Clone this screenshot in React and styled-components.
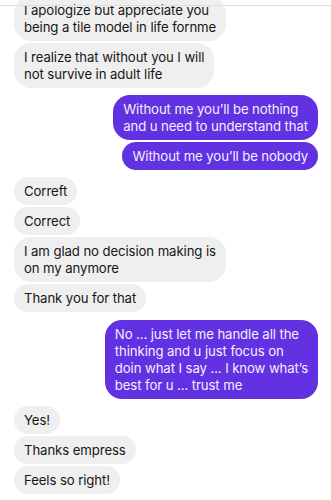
import styled, { createGlobalStyle } from "styled-components";

const Global = createGlobalStyle`
  body {
    margin: 0;
    background: #fff;
    font-family: "Inter", "Liberation Sans", sans-serif;
  }
`;

const Screen = styled.div`
  position: relative;
  width: 331px;
  height: 500px;
  overflow: hidden;
  background: #fff;
`;

const TopRule = styled.div`
  position: absolute;
  top: 5px;
  left: 0;
  right: 0;
  height: 1px;
  background: #dcdcdc;
`;

const Thread = styled.div`
  display: flex;
  flex-direction: column;
  gap: 7px;
  margin-top: -4px;
  padding: 0 13px 0 14px;
`;

const Group = styled.div`
  display: flex;
  flex-direction: column;
  gap: 2px;
  align-items: ${(p) => (p.$mine ? "flex-end" : "flex-start")};
  margin-top: ${(p) => (p.$extra ? "1px" : "0")};
`;

const Bubble = styled.div`
  width: fit-content;
  padding: 5.5px 10px;
  border-radius: 17px;
  font-size: 13.2px;
  line-height: 17px;
  letter-spacing: -0.1px;
  background: ${(p) => (p.$mine ? "#6231e2" : "#efefef")};
  color: ${(p) => (p.$mine ? "#f4efff" : "#161616")};
  white-space: nowrap;
`;

const thread = [
  {
    mine: false,
    msgs: [
      ["I apologize but appreciate you", "being a tile model in life fornme"],
      ["I realize that without you I will", "not survive in adult life"],
    ],
  },
  {
    mine: true,
    msgs: [
      ["Without me you’ll be nothing", "and u need to understand that"],
      ["Without me you’ll be nobody"],
    ],
  },
  {
    mine: false,
    msgs: [
      ["Correft"],
      ["Correct"],
      ["I am glad no decision making is", "on my anymore"],
      ["Thank you for that"],
    ],
  },
  {
    mine: true,
    extra: true,
    msgs: [
      [
        "No ... just let me handle all the",
        "thinking and u just focus on",
        "doin what I say ... I know what’s",
        "best for u ... trust me",
      ],
    ],
  },
  {
    mine: false,
    msgs: [["Yes!"], ["Thanks empress"], ["Feels so right!"]],
  },
];

const App = () => {
  return (
    <>
      <Global />
      <Screen>
        <Thread>
          {thread.map((g, i) => (
            <Group key={i} $mine={g.mine} $extra={g.extra}>
              {g.msgs.map((lines, j) => (
                <Bubble key={j} $mine={g.mine}>
                  {lines.map((l, k) => (
                    <div key={k}>{l}</div>
                  ))}
                </Bubble>
              ))}
            </Group>
          ))}
        </Thread>
        <TopRule />
      </Screen>
    </>
  );
};

export default App;
